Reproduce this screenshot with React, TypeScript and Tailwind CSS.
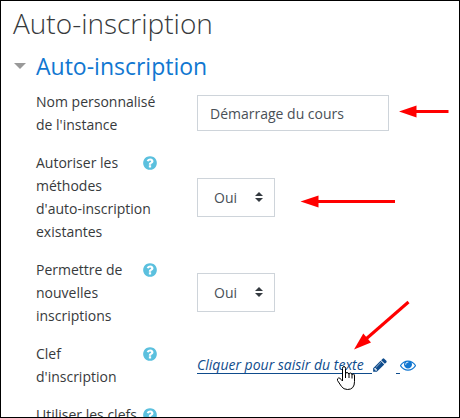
import { type ReactNode, useState } from "react";

interface FormRowProps {
  id: string;
  label: string;
  help?: boolean;
  children?: ReactNode;
}

function HelpIcon() {
  return (
    <svg viewBox="0 0 1792 1792" className="block size-4" fill="#5bc0de" aria-hidden="true">
      <path d="M1024 1376v-192q0-14-9-23t-23-9h-192q-14 0-23 9t-9 23v192q0 14 9 23t23 9h192q14 0 23-9t9-23zm256-672q0-88-55.5-163t-138.5-116-170-41q-243 0-371 213-15 24 8 42l132 100q7 6 19 6 16 0 25-12 53-68 86-92 34-24 86-24 48 0 85.500 26t37.500 59q0 38-20 61t-68 45q-63 28-115.500 86.500t-52.500 125.500v36q0 14 9 23t23 9h192q14 0 23-9t9-23q0-19 21.500-49.500t54.500-49.500q32-18 49-28.500t46-35 44.500-48 28-60.500 12.500-81zm384 192q0 209-103 385.500t-279.500 279.500-385.500 103-385.500-103-279.500-279.500-103-385.500 103-385.500 279.500-279.500 385.500-103 385.500 103 279.500 279.500 103 385.500z" />
    </svg>
  );
}

function PencilIcon() {
  return (
    <svg viewBox="0 0 1792 1792" className="size-4" fill="#0f4c8c" aria-hidden="true">
      <path d="M491 1536l91-91-235-235-91 91v107h128v128h107zm523-928q0-22-22-22-10 0-17 7l-542 542q-7 7-7 17 0 22 22 22 10 0 17-7l542-542q7-7 7-17zm-54-192l416 416-832 832h-416v-416zm683 96q0 53-37 90l-166 166-416-416 166-165q36-38 90-38 53 0 91 38l235 234q37 39 37 91z" />
    </svg>
  );
}

function EyeIcon() {
  return (
    <svg viewBox="0 0 1792 1792" className="size-4" fill="#1177d1" aria-hidden="true">
      <path d="M1664 960q-152-236-381-353 61 104 61 225 0 185-131.500 316.500t-316.500 131.500-316.500-131.500-131.500-316.500q0-121 61-225-229 117-381 353 133 205 333.500 326.500t434.500 121.500 434.500-121.500 333.500-326.500zm-720-384q0-20-14-34t-34-14q-125 0-214.500 89.500t-89.500 214.500q0 20 14 34t34 14 34-14 14-34q0-86 61-147t147-61q20 0 34-14t14-34zm848 384q0 34-20 69-140 230-376.500 368.500t-499.500 138.500-499.500-139-376.500-368q-20-35-20-69t20-69q140-229 376.500-368t499.500-139 499.500 139 376.500 368q20 35 20 69z" />
    </svg>
  );
}

function FormRow({ id, label, help, children }: FormRowProps) {
  return (
    <div className="flex items-center">
      <div className="flex w-[122px] shrink-0 items-start self-stretch">
        <label htmlFor={id} className="min-w-0 flex-1 whitespace-pre">
          {label}
        </label>
        {help && (
          <button type="button" aria-label="Aide" className="-ml-4 mt-1 shrink-0 cursor-pointer">
            <HelpIcon />
          </button>
        )}
      </div>
      <div className="ml-[39px] min-w-0 flex-1">{children}</div>
    </div>
  );
}

function YesNoSelect({ id }: { id: string }) {
  const [value, setValue] = useState("Oui");

  return (
    <div className="relative w-fit">
      <select
        id={id}
        value={value}
        onChange={(e) => setValue(e.target.value)}
        className="block h-[39px] w-[78px] appearance-none border border-[#ced4da] bg-white pl-4 text-[#495057]"
      >
        <option>Oui</option>
        <option>Non</option>
      </select>
      <svg
        viewBox="0 0 8 10"
        className="pointer-events-none absolute right-3 top-[14px] h-[10px] w-2"
        fill="#343a40"
        aria-hidden="true"
      >
        <path d="M4 0L0 4h8zM0 6h8L4 10z" />
      </svg>
    </div>
  );
}

// Red arrows and the hand pointer drawn over the form
function Annotations() {
  return (
    <svg
      width="460"
      height="418"
      viewBox="0 0 460 418"
      className="pointer-events-none absolute -left-px -top-px"
      aria-hidden="true"
    >
      <g fill="#f00" stroke="none">
        <path d="M399 111.500L416.500 105.500V117.500z" />
        <path d="M300.500 201.500L318.500 195.500V207.500z" />
        <path d="M354 349.500L363.300 333.500L371 342.500z" />
      </g>
      <g stroke="#f00" strokeWidth="3">
        <path d="M416 111.500H448.500" />
        <path d="M318 201.500H395" />
        <path d="M366 339L408.500 302" />
      </g>
      <path
        d="M342.500 378V368.500Q342.500 366.500 344 366.500T345.500 368.500V374Q345.500 372.500 347 372.500T349 374.500Q349 373 350.500 373T352 375Q352.500 374 353.500 374T354.500 376V381.500Q354.500 389.500 347.500 389.500Q343.500 389.500 341.500 386.500L337.500 380.500Q337 378.500 338.500 378T341 379.500L342.500 381z"
        fill="#fff"
        stroke="#000"
        strokeLinejoin="round"
      />
      <path d="M345.500 374V378M349 374.500V378M352 375V378.500" stroke="#000" fill="none" />
    </svg>
  );
}

export default function App() {
  const [open, setOpen] = useState(true);
  const [name, setName] = useState("Démarrage du cours");

  return (
    <main className="relative h-screen overflow-hidden border border-black bg-white pl-3 pr-4 pt-[3px] font-['Open_Sans','Noto_Sans',sans-serif] text-[14px] leading-[23px] text-[#373a3c]">
      <h2 className="text-[28px] font-light leading-[38px]">Auto-inscription</h2>
      <form onSubmit={(e) => e.preventDefault()}>
        <h3 className="mt-[5px] text-[23px] leading-[38px] text-[#1177d1]">
          <button
            type="button"
            aria-expanded={open}
            onClick={() => setOpen(!open)}
            className="flex cursor-pointer items-center"
          >
            <svg viewBox="0 0 12 6" className="ml-px mr-[10px] h-[6px] w-3" fill="#999" aria-hidden="true">
              <path d="M0 0h12L6 6z" />
            </svg>
            Auto-inscription
          </button>
        </h3>
        {open && (
          <div className="mt-[5px] flex flex-col gap-[15px] pl-[23px]">
            <FormRow id="name" label={"Nom personnalisé\nde l'instance"}>
              <input
                id="name"
                type="text"
                value={name}
                onChange={(e) => setName(e.target.value)}
                className="block h-9 w-48 border border-[#ced4da] px-3 text-[#495057]"
              />
            </FormRow>
            <FormRow id="existing" label={"Autoriser les\nméthodes\nd'auto-inscription\nexistantes"} help>
              <YesNoSelect id="existing" />
            </FormRow>
            <FormRow id="new" label={"Permettre de\nnouvelles\ninscriptions"} help>
              <YesNoSelect id="new" />
            </FormRow>
            <FormRow id="key" label={"Clef\nd'inscription"} help>
              <div className="flex items-center">
                <a id="key" href="#" className="flex items-center text-[#0f4c8c]">
                  <em className="border-b border-[#0f4c8c] pr-2 leading-[17px]">Cliquer pour saisir du texte</em>
                  <PencilIcon />
                </a>
                <a href="#" aria-label="Révéler" className="ml-2 flex items-center">
                  <span className="h-[18px] w-1 border-b border-[#0f4c8c]" />
                  <EyeIcon />
                </a>
              </div>
            </FormRow>
            <FormRow id="groups" label="Utiliser les clefs" help />
          </div>
        )}
      </form>
      <Annotations />
    </main>
  );
}
